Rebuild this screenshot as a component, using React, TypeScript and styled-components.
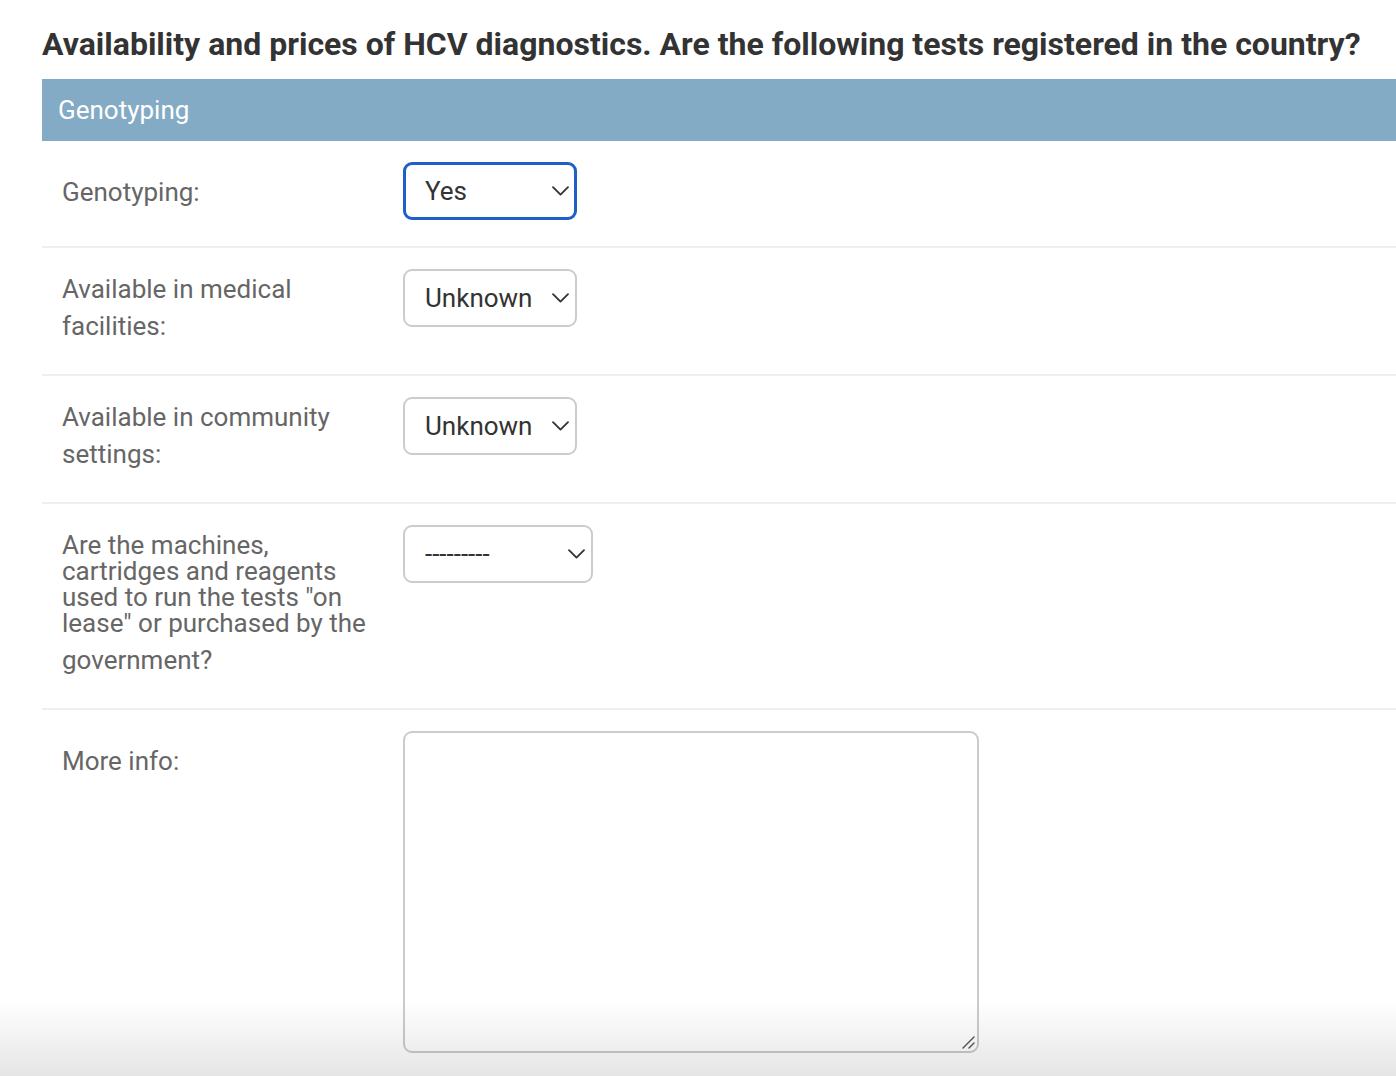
import React from "react";
import styled, { createGlobalStyle } from "styled-components";

const GlobalStyle = createGlobalStyle`
  html, body {
    margin: 0;
    padding: 0;
    background: #fff;
    overflow: hidden;
  }
  body {
    font-family: Roboto, "Liberation Sans", Arial, sans-serif;
    color: #333;
  }
  * { box-sizing: border-box; }
`;

const Page = styled.div`
  padding-left: 42px;
`;

const Title = styled.h2`
  margin: 24px 0 15px;
  font-size: 32px;
  line-height: 40px;
  font-weight: 700;
  color: #333;
  white-space: nowrap;
`;

const Fieldset = styled.section`
  display: flex;
  flex-direction: column;
`;

const Caption = styled.div`
  height: 62px;
  display: flex;
  align-items: center;
  padding: 0 16px;
  background: #84abc5;
  color: #fff;
  font-size: 26px;
  font-weight: 400;
`;

const Row = styled.div<{ $last?: boolean }>`
  display: grid;
  grid-template-columns: 341px auto;
  align-items: start;
  padding: 21px 20px 26px;
  border-bottom: ${(p) => (p.$last ? "none" : "2px solid #eee")};
`;

const Label = styled.label<{ $single?: boolean }>`
  display: block;
  font-size: 26px;
  line-height: 37px;
  color: #666;
  padding: ${(p) => (p.$single ? "12px" : "2px")} 20px 3px 0;
`;

const Compact = styled.span`
  display: block;
  line-height: 26px;
  margin: 5px 0 6px;
`;

const SelectWrap = styled.div<{ $w: number }>`
  position: relative;
  width: ${(p) => p.$w}px;
  height: 58px;
  justify-self: start;
`;

const Select = styled.select<{ $focused?: boolean }>`
  appearance: none;
  -webkit-appearance: none;
  width: 100%;
  height: 58px;
  margin: 0;
  padding: 0 40px 0 ${(p) => (p.$focused ? "19px" : "20px")};
  border: ${(p) => (p.$focused ? "3px solid #1f5fc8" : "2px solid #ccc")};
  border-radius: 9px;
  background: #fff;
  color: #333;
  font-family: Roboto, "Liberation Sans", Arial, sans-serif;
  font-size: 26px;
  outline: none;
`;

const Chevron = styled.svg`
  position: absolute;
  right: 8px;
  top: 50%;
  width: 17px;
  height: 10px;
  margin-top: -5px;
  pointer-events: none;
`;

const AreaWrap = styled.div`
  position: relative;
  width: 576px;
  height: 322px;
`;

const TextArea = styled.textarea`
  display: block;
  width: 100%;
  height: 100%;
  margin: 0;
  border: 2px solid #ccc;
  border-radius: 9px;
  background: #fff;
  font-family: Roboto, "Liberation Sans", Arial, sans-serif;
  font-size: 26px;
  padding: 10px 12px;
  outline: none;
  resize: none;
`;

const Grip = styled.svg`
  position: absolute;
  right: 4px;
  bottom: 4px;
  width: 14px;
  height: 14px;
  pointer-events: none;
`;

const BottomShade = styled.div`
  position: fixed;
  left: 0;
  right: 0;
  bottom: 0;
  height: 76px;
  background: linear-gradient(to bottom, rgba(0, 0, 0, 0), rgba(0, 0, 0, 0.1));
  pointer-events: none;
`;

type SelProps = {
  id: string;
  width: number;
  value: string;
  options: string[];
  focused?: boolean;
};

function DropDown({ id, width, value, options, focused }: SelProps) {
  return (
    <SelectWrap $w={width}>
      <Select id={id} $focused={focused} defaultValue={value}>
        {options.map((o) => (
          <option key={o} value={o}>
            {o}
          </option>
        ))}
      </Select>
      <Chevron viewBox="0 0 17 10" fill="none">
        <path d="M1 1.2 L8.5 8.6 L16 1.2" stroke="#333" strokeWidth="1.8" strokeLinecap="round" strokeLinejoin="round" />
      </Chevron>
    </SelectWrap>
  );
}

const yesNo = ["---------", "Yes", "No", "Unknown"];

export default function App() {
  return (
    <>
      <GlobalStyle />
      <Page>
        <Title>Availability and prices of HCV diagnostics. Are the following tests registered in the country?</Title>
        <Fieldset>
          <Caption>Genotyping</Caption>
          <Row>
            <Label $single htmlFor="geno">Genotyping:</Label>
            <DropDown id="geno" width={174} value="Yes" options={yesNo} focused />
          </Row>
          <Row>
            <Label htmlFor="med">Available in medical facilities:</Label>
            <DropDown id="med" width={174} value="Unknown" options={yesNo} />
          </Row>
          <Row>
            <Label htmlFor="comm">Available in community settings:</Label>
            <DropDown id="comm" width={174} value="Unknown" options={yesNo} />
          </Row>
          <Row>
            <Label htmlFor="lease">
              <Compact>
                Are the machines,
                <br />
                cartridges and reagents
                <br />
                used to run the tests "on
                <br />
                lease" or purchased by the
              </Compact>
              government?
            </Label>
            <DropDown
              id="lease"
              width={190}
              value="---------"
              options={["---------", "On lease", "Purchased", "Unknown"]}
            />
          </Row>
          <Row $last>
            <Label $single htmlFor="info">More info:</Label>
            <AreaWrap>
              <TextArea id="info" />
              <Grip viewBox="0 0 14 14" fill="none">
                <path d="M2 13 L13 2 M8 13 L13 8" stroke="#555" strokeWidth="1.4" strokeLinecap="round" />
              </Grip>
            </AreaWrap>
          </Row>
        </Fieldset>
      </Page>
      <BottomShade />
    </>
  );
}
